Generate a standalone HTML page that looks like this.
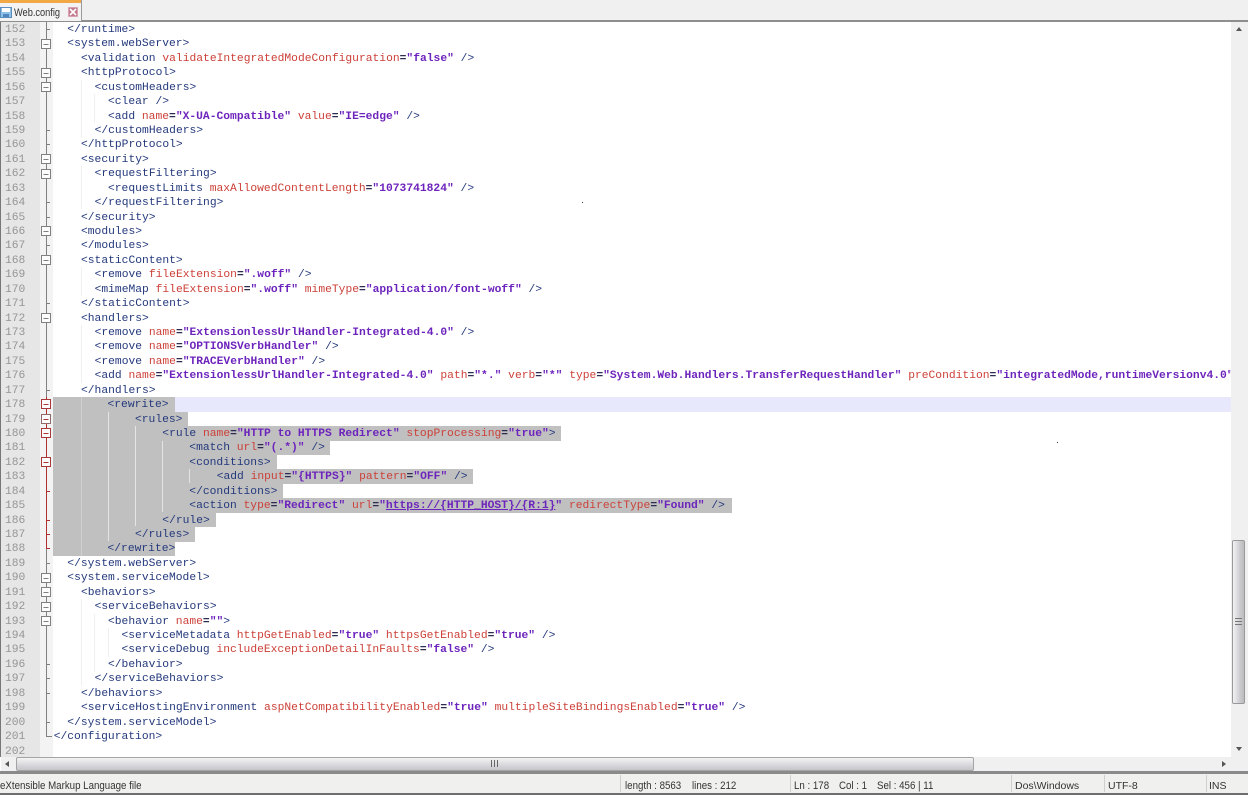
<!DOCTYPE html>
<html><head><meta charset="utf-8"><style>
html,body{margin:0;padding:0;width:1248px;height:795px;overflow:hidden;background:#fff}
#p{position:relative;width:1248px;height:795px;overflow:hidden;font-family:"Liberation Mono",monospace}
.b{position:absolute}
#ed{position:absolute;left:0;top:22px;width:1231px;height:735px;overflow:hidden}
.l{position:absolute;white-space:pre;font-size:11.3px;line-height:14.43px;height:14.43px;margin-top:1px;color:#24397c}
.n{position:absolute;left:5px;font-size:11.3px;line-height:14.43px;margin-top:1px;color:#959595}
.a{color:#cc4038}.v{color:#6d24bc;font-weight:bold}.e{color:#2c2c50;font-weight:bold}
.u{text-decoration:underline}
.s{position:absolute;font-family:"Liberation Sans",sans-serif;font-size:10.8px;line-height:14px;color:#333;white-space:pre;top:779px;transform-origin:0 50%;transform:scaleX(.9)}
.sep{position:absolute;top:775px;width:1px;height:17px;background:#d0d0d0}
</style></head><body><div id="p">
<div class="b" style="left:0;top:0;width:1248px;height:21px;background:#f0f0f0"></div>
<div class="b" style="left:0;top:20px;width:1248px;height:2px;background:#8e8e8e"></div>
<div class="b" style="left:0;top:0;width:81px;height:21px;background:#f3f3f3;border-right:1px solid #9a9a9a"></div>
<div class="b" style="left:0;top:0;width:81px;height:3px;background:#f2a844"></div>
<svg class="b" style="left:0;top:7px" width="13" height="11"><rect x="0.5" y="0.5" width="11" height="10" fill="#8fc0e6" stroke="#5b8ebf"/><rect x="2" y="1" width="8" height="4" fill="#fff"/><rect x="3" y="7" width="6" height="3" fill="#4f86bd"/></svg>
<div class="b" style="left:14px;top:6px;font-family:'Liberation Sans',sans-serif;font-size:11px;line-height:14px;color:#333;transform-origin:0 50%;transform:scaleX(.84)">Web.config</div>
<svg class="b" style="left:68px;top:7px" width="10" height="10"><rect width="10" height="10" rx="1" fill="#d9a0b0"/><rect x="1" y="1" width="8" height="8" fill="#c2798f"/><path d="M2 2L8 8M8 2L2 8" stroke="#fff" stroke-width="1.6"/></svg>

<div id="ed">
<div class="b" style="left:0;top:0;width:1px;height:735px;background:#777"></div>
<div class="b" style="left:1px;top:0;width:39px;height:735px;background:#e6e6e6"></div>
<div class="b" style="left:40px;top:0;width:13px;height:735px;background:#f3f3f3"></div>

<div class="b" style="left:175px;top:375.2px;width:1056px;height:14.43px;background:#e8e8fd"></div>
<div class="b" style="left:53px;top:375.2px;width:122px;height:14.43px;background:#c0c0c0"></div>
<div class="b" style="left:53px;top:389.6px;width:135px;height:14.43px;background:#c0c0c0"></div>
<div class="b" style="left:53px;top:404.1px;width:508px;height:14.43px;background:#c0c0c0"></div>
<div class="b" style="left:53px;top:418.5px;width:277px;height:14.43px;background:#c0c0c0"></div>
<div class="b" style="left:53px;top:432.9px;width:223.5px;height:14.43px;background:#c0c0c0"></div>
<div class="b" style="left:53px;top:447.4px;width:420px;height:14.43px;background:#c0c0c0"></div>
<div class="b" style="left:53px;top:461.8px;width:230px;height:14.43px;background:#c0c0c0"></div>
<div class="b" style="left:53px;top:476.2px;width:679px;height:14.43px;background:#c0c0c0"></div>
<div class="b" style="left:53px;top:490.7px;width:162.5px;height:14.43px;background:#c0c0c0"></div>
<div class="b" style="left:53px;top:505.1px;width:142px;height:14.43px;background:#c0c0c0"></div>
<div class="b" style="left:53px;top:519.5px;width:122px;height:14.43px;background:#c0c0c0"></div>

<div class="b" style="left:81px;top:375px;width:1px;height:159px;background:#d0d0d0"></div>
<div class="b" style="left:108px;top:390px;width:1px;height:129px;background:#e4e4e4"></div>
<div class="b" style="left:135px;top:404px;width:1px;height:100px;background:#e4e4e4"></div>
<div class="b" style="left:162px;top:419px;width:1px;height:71px;background:#e4e4e4"></div>
<div class="b" style="left:189px;top:447px;width:1px;height:14px;background:#e4e4e4"></div>
<div class="b" style="left:81px;top:58px;width:1px;height:58px;background:#f0f0f0"></div>
<div class="b" style="left:94px;top:72px;width:1px;height:29px;background:#f0f0f0"></div>
<div class="b" style="left:81px;top:144px;width:1px;height:43px;background:#f0f0f0"></div>
<div class="b" style="left:81px;top:245px;width:1px;height:29px;background:#f0f0f0"></div>
<div class="b" style="left:81px;top:303px;width:1px;height:58px;background:#f0f0f0"></div>
<div class="b" style="left:81px;top:577px;width:1px;height:87px;background:#f0f0f0"></div>
<div class="b" style="left:94px;top:592px;width:1px;height:58px;background:#f0f0f0"></div>
<div class="b" style="left:108px;top:606px;width:1px;height:29px;background:#f0f0f0"></div>

<svg class="b" style="left:40px;top:0" width="13" height="735" fill="none" stroke="#808080" stroke-width="1" shape-rendering="crispEdges">
<path d="M6.5 0V714.5H12M6.5 7.5H10M6.5 108.5H10M6.5 122.5H10M6.5 180.5H10M6.5 195.5H10M6.5 223.5H10M6.5 281.5H10M6.5 368.5H10M6.5 541.5H10M6.5 642.5H10M6.5 656.5H10M6.5 671.5H10M6.5 700.5H10"/>
<path stroke="#b03030" d="M6.5 375V527M6.5 469.5H10M6.5 498.5H10M6.5 512.5H10M6.5 526.5H10"/>
<g fill="#fdfdfd">
<rect x="1.5" y="17.5" width="9" height="9"/><rect x="1.5" y="46.5" width="9" height="9"/><rect x="1.5" y="60.5" width="9" height="9"/><rect x="1.5" y="132.5" width="9" height="9"/><rect x="1.5" y="147.5" width="9" height="9"/><rect x="1.5" y="204.5" width="9" height="9"/><rect x="1.5" y="233.5" width="9" height="9"/><rect x="1.5" y="291.5" width="9" height="9"/>
<rect x="1.5" y="551.5" width="9" height="9"/><rect x="1.5" y="565.5" width="9" height="9"/><rect x="1.5" y="580.5" width="9" height="9"/><rect x="1.5" y="594.5" width="9" height="9"/>
<rect x="1.5" y="377.5" stroke="#a83838" width="9" height="9"/><rect x="1.5" y="392.5" stroke="#8f6b6b" width="9" height="9"/><rect x="1.5" y="406.5" stroke="#a83838" width="9" height="9"/><rect x="1.5" y="435.5" stroke="#a83838" width="9" height="9"/>
</g>
<path d="M3.5 22.5H8.5M3.5 51.5H8.5M3.5 65.5H8.5M3.5 137.5H8.5M3.5 152.5H8.5M3.5 209.5H8.5M3.5 238.5H8.5M3.5 296.5H8.5M3.5 556.5H8.5M3.5 570.5H8.5M3.5 585.5H8.5M3.5 599.5H8.5"/>
<path stroke="#a83838" d="M3.5 382.5H8.5M3.5 397.5H8.5M3.5 411.5H8.5M3.5 440.5H8.5"/>
</svg>

<div class="n" style="top:0px">152</div><div class="n" style="top:14.43px">153</div><div class="n" style="top:28.86px">154</div><div class="n" style="top:43.29px">155</div><div class="n" style="top:57.72px">156</div><div class="n" style="top:72.15px">157</div><div class="n" style="top:86.58px">158</div><div class="n" style="top:101.01px">159</div><div class="n" style="top:115.44px">160</div><div class="n" style="top:129.87px">161</div><div class="n" style="top:144.3px">162</div><div class="n" style="top:158.73px">163</div><div class="n" style="top:173.16px">164</div><div class="n" style="top:187.59px">165</div><div class="n" style="top:202.02px">166</div><div class="n" style="top:216.45px">167</div><div class="n" style="top:230.88px">168</div><div class="n" style="top:245.31px">169</div><div class="n" style="top:259.74px">170</div><div class="n" style="top:274.17px">171</div><div class="n" style="top:288.6px">172</div><div class="n" style="top:303.03px">173</div><div class="n" style="top:317.46px">174</div><div class="n" style="top:331.89px">175</div><div class="n" style="top:346.32px">176</div><div class="n" style="top:360.75px">177</div><div class="n" style="top:375.18px">178</div><div class="n" style="top:389.61px">179</div><div class="n" style="top:404.04px">180</div><div class="n" style="top:418.47px">181</div><div class="n" style="top:432.9px">182</div><div class="n" style="top:447.33px">183</div><div class="n" style="top:461.76px">184</div><div class="n" style="top:476.19px">185</div><div class="n" style="top:490.62px">186</div><div class="n" style="top:505.05px">187</div><div class="n" style="top:519.48px">188</div><div class="n" style="top:533.91px">189</div><div class="n" style="top:548.34px">190</div><div class="n" style="top:562.77px">191</div><div class="n" style="top:577.2px">192</div><div class="n" style="top:591.63px">193</div><div class="n" style="top:606.06px">194</div><div class="n" style="top:620.49px">195</div><div class="n" style="top:634.92px">196</div><div class="n" style="top:649.35px">197</div><div class="n" style="top:663.78px">198</div><div class="n" style="top:678.21px">199</div><div class="n" style="top:692.64px">200</div><div class="n" style="top:707.07px">201</div><div class="n" style="top:721.5px">202</div>

<div class="l" style="top:0px;left:67.3px">&lt;/runtime&gt;</div>
<div class="l" style="top:14.43px;left:67.3px">&lt;system.webServer&gt;</div>
<div class="l" style="top:28.86px;left:81px">&lt;validation <span class="a">validateIntegratedModeConfiguration</span><span class="e">=</span><span class="v">"false"</span> /&gt;</div>
<div class="l" style="top:43.29px;left:81px">&lt;httpProtocol&gt;</div>
<div class="l" style="top:57.72px;left:94.6px">&lt;customHeaders&gt;</div>
<div class="l" style="top:72.15px;left:108px">&lt;clear /&gt;</div>
<div class="l" style="top:86.58px;left:108px">&lt;add <span class="a">name</span><span class="e">=</span><span class="v">"X-UA-Compatible"</span> <span class="a">value</span><span class="e">=</span><span class="v">"IE=edge"</span> /&gt;</div>
<div class="l" style="top:101.01px;left:94.6px">&lt;/customHeaders&gt;</div>
<div class="l" style="top:115.44px;left:81px">&lt;/httpProtocol&gt;</div>
<div class="l" style="top:129.87px;left:81px">&lt;security&gt;</div>
<div class="l" style="top:144.3px;left:94.6px">&lt;requestFiltering&gt;</div>
<div class="l" style="top:158.73px;left:108px">&lt;requestLimits <span class="a">maxAllowedContentLength</span><span class="e">=</span><span class="v">"1073741824"</span> /&gt;</div>
<div class="l" style="top:173.16px;left:94.6px">&lt;/requestFiltering&gt;</div>
<div class="l" style="top:187.59px;left:81px">&lt;/security&gt;</div>
<div class="l" style="top:202.02px;left:81px">&lt;modules&gt;</div>
<div class="l" style="top:216.45px;left:81px">&lt;/modules&gt;</div>
<div class="l" style="top:230.88px;left:81px">&lt;staticContent&gt;</div>
<div class="l" style="top:245.31px;left:94.6px">&lt;remove <span class="a">fileExtension</span><span class="e">=</span><span class="v">".woff"</span> /&gt;</div>
<div class="l" style="top:259.74px;left:94.6px">&lt;mimeMap <span class="a">fileExtension</span><span class="e">=</span><span class="v">".woff"</span> <span class="a">mimeType</span><span class="e">=</span><span class="v">"application/font-woff"</span> /&gt;</div>
<div class="l" style="top:274.17px;left:81px">&lt;/staticContent&gt;</div>
<div class="l" style="top:288.6px;left:81px">&lt;handlers&gt;</div>
<div class="l" style="top:303.03px;left:94.6px">&lt;remove <span class="a">name</span><span class="e">=</span><span class="v">"ExtensionlessUrlHandler-Integrated-4.0"</span> /&gt;</div>
<div class="l" style="top:317.46px;left:94.6px">&lt;remove <span class="a">name</span><span class="e">=</span><span class="v">"OPTIONSVerbHandler"</span> /&gt;</div>
<div class="l" style="top:331.89px;left:94.6px">&lt;remove <span class="a">name</span><span class="e">=</span><span class="v">"TRACEVerbHandler"</span> /&gt;</div>
<div class="l" style="top:346.32px;left:94.6px">&lt;add <span class="a">name</span><span class="e">=</span><span class="v">"ExtensionlessUrlHandler-Integrated-4.0"</span> <span class="a">path</span><span class="e">=</span><span class="v">"*."</span> <span class="a">verb</span><span class="e">=</span><span class="v">"*"</span> <span class="a">type</span><span class="e">=</span><span class="v">"System.Web.Handlers.TransferRequestHandler"</span> <span class="a">preCondition</span><span class="e">=</span><span class="v">"integratedMode,runtimeVersionv4.0"</span> /&gt;</div>
<div class="l" style="top:360.75px;left:81px">&lt;/handlers&gt;</div>
<div class="l" style="top:375.18px;left:107.5px">&lt;rewrite&gt;</div>
<div class="l" style="top:389.61px;left:135px">&lt;rules&gt;</div>
<div class="l" style="top:404.04px;left:162.3px">&lt;rule <span class="a">name</span><span class="e">=</span><span class="v">"HTTP to HTTPS Redirect"</span> <span class="a">stopProcessing</span><span class="e">=</span><span class="v">"true"</span>&gt;</div>
<div class="l" style="top:418.47px;left:189.3px">&lt;match <span class="a">url</span><span class="e">=</span><span class="v">"(.*)"</span> /&gt;</div>
<div class="l" style="top:432.9px;left:189.3px">&lt;conditions&gt;</div>
<div class="l" style="top:447.33px;left:216.7px">&lt;add <span class="a">input</span><span class="e">=</span><span class="v">"{HTTPS}"</span> <span class="a">pattern</span><span class="e">=</span><span class="v">"OFF"</span> /&gt;</div>
<div class="l" style="top:461.76px;left:189.3px">&lt;/conditions&gt;</div>
<div class="l" style="top:476.19px;left:189.3px">&lt;action <span class="a">type</span><span class="e">=</span><span class="v">"Redirect"</span> <span class="a">url</span><span class="e">=</span><span class="v">"<span class="u">https://{HTTP_HOST}/{R:1}</span>"</span> <span class="a">redirectType</span><span class="e">=</span><span class="v">"Found"</span> /&gt;</div>
<div class="l" style="top:490.62px;left:162.3px">&lt;/rule&gt;</div>
<div class="l" style="top:505.05px;left:135px">&lt;/rules&gt;</div>
<div class="l" style="top:519.48px;left:107.5px">&lt;/rewrite&gt;</div>
<div class="l" style="top:533.91px;left:67.3px">&lt;/system.webServer&gt;</div>
<div class="l" style="top:548.34px;left:67.3px">&lt;system.serviceModel&gt;</div>
<div class="l" style="top:562.77px;left:81px">&lt;behaviors&gt;</div>
<div class="l" style="top:577.2px;left:94.6px">&lt;serviceBehaviors&gt;</div>
<div class="l" style="top:591.63px;left:108px">&lt;behavior <span class="a">name</span><span class="e">=</span><span class="v">""</span>&gt;</div>
<div class="l" style="top:606.06px;left:121.5px">&lt;serviceMetadata <span class="a">httpGetEnabled</span><span class="e">=</span><span class="v">"true"</span> <span class="a">httpsGetEnabled</span><span class="e">=</span><span class="v">"true"</span> /&gt;</div>
<div class="l" style="top:620.49px;left:121.5px">&lt;serviceDebug <span class="a">includeExceptionDetailInFaults</span><span class="e">=</span><span class="v">"false"</span> /&gt;</div>
<div class="l" style="top:634.92px;left:108px">&lt;/behavior&gt;</div>
<div class="l" style="top:649.35px;left:94.6px">&lt;/serviceBehaviors&gt;</div>
<div class="l" style="top:663.78px;left:81px">&lt;/behaviors&gt;</div>
<div class="l" style="top:678.21px;left:81px">&lt;serviceHostingEnvironment <span class="a">aspNetCompatibilityEnabled</span><span class="e">=</span><span class="v">"true"</span> <span class="a">multipleSiteBindingsEnabled</span><span class="e">=</span><span class="v">"true"</span> /&gt;</div>
<div class="l" style="top:692.64px;left:67.3px">&lt;/system.serviceModel&gt;</div>
<div class="l" style="top:707.07px;left:53.7px">&lt;/configuration&gt;</div>
</div>

<div class="b" style="left:582px;top:202px;width:1px;height:1px;background:#333"></div>
<div class="b" style="left:1057px;top:442px;width:1px;height:1px;background:#333"></div>

<div class="b" style="left:1231px;top:22px;width:17px;height:735px;background:#f0f0f0"></div>
<svg class="b" style="left:1236px;top:27px" width="7" height="5"><path d="M0 4H6L3 0Z" fill="#555"/></svg>
<svg class="b" style="left:1236px;top:747px" width="7" height="5"><path d="M0 0H6L3 4Z" fill="#555"/></svg>
<div class="b" style="left:1232px;top:540px;width:13px;height:164px;box-sizing:border-box;border:1px solid #999;border-radius:2px;background:linear-gradient(90deg,#f2f2f2,#d8d8dc 45%,#c8c8cc 70%,#bcbcbc)"></div>
<div class="b" style="left:1235px;top:618px;width:7px;height:1px;background:#777;box-shadow:0 3px #777,0 6px #777"></div>

<div class="b" style="left:1px;top:757px;width:1247px;height:14px;background:#f0f0f0"></div>
<svg class="b" style="left:5px;top:761px" width="5" height="7"><path d="M4 0V6L0 3Z" fill="#555"/></svg>
<svg class="b" style="left:1222px;top:761px" width="5" height="7"><path d="M0 0V6L4 3Z" fill="#555"/></svg>
<div class="b" style="left:16px;top:757px;width:958px;height:14px;box-sizing:border-box;border:1px solid #a4a4a4;border-radius:2px;background:linear-gradient(180deg,#f4f4f4,#dcdce0 50%,#c6c6ca)"></div>
<div class="b" style="left:491px;top:760px;width:1px;height:7px;background:#666;box-shadow:3px 0 #666,6px 0 #666"></div>

<div class="b" style="left:0;top:771px;width:1248px;height:3px;background:#8a8a8a"></div>
<div class="b" style="left:0;top:774px;width:1248px;height:19px;background:#f0f0ee"></div>
<div class="b" style="left:0;top:793px;width:1248px;height:2px;background:#6e6e6e"></div>
<div class="sep" style="left:620px"></div><div class="sep" style="left:790px"></div><div class="sep" style="left:1011px"></div><div class="sep" style="left:1104px"></div><div class="sep" style="left:1206px"></div>
<div class="s" style="left:0">eXtensible Markup Language file</div>
<div class="s" style="left:625px">length : 8563</div>
<div class="s" style="left:692px">lines : 212</div>
<div class="s" style="left:794px">Ln : 178</div>
<div class="s" style="left:839px">Col : 1</div>
<div class="s" style="left:877px">Sel : 456 | 11</div>
<div class="s" style="left:1015px;transform:none;font-size:10.5px">Dos\Windows</div>
<div class="s" style="left:1108px;transform:none;font-size:10.5px">UTF-8</div>
<div class="s" style="left:1209px;transform:none;font-size:10.5px">INS</div>
</div></body></html>
